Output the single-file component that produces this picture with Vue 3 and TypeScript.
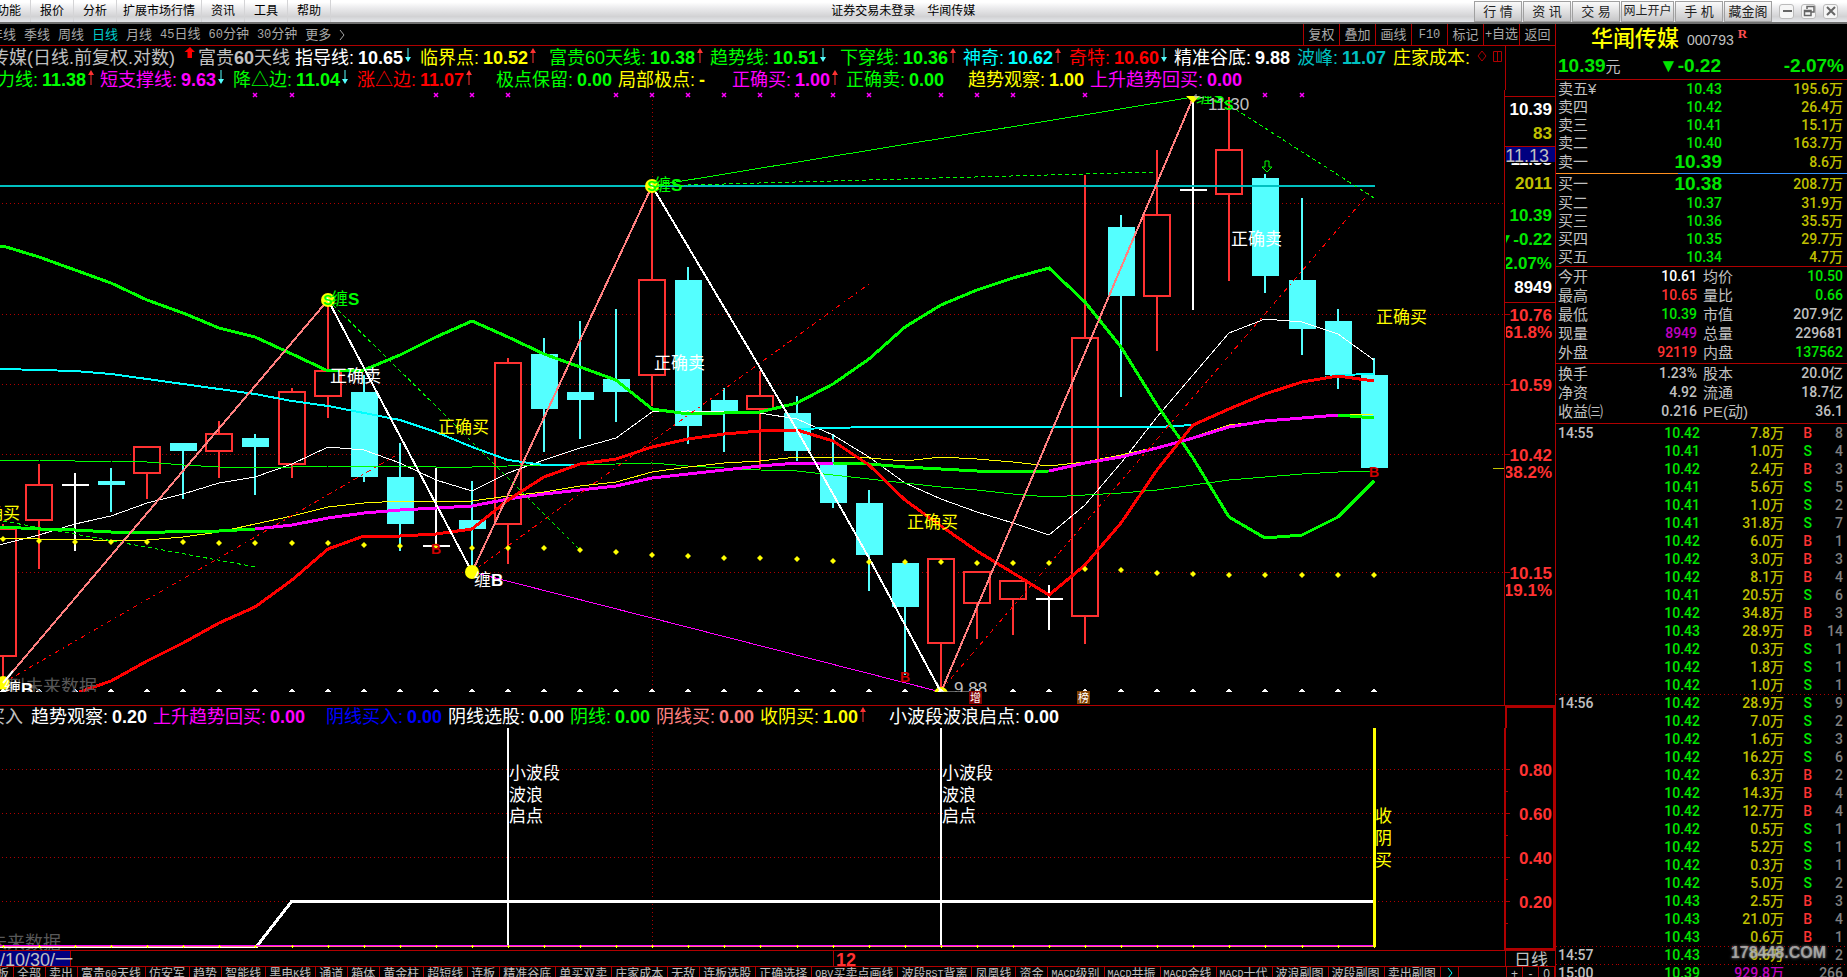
<script setup lang="ts">
interface Indicator { label: string; value?: string; color: string; span: number; arrow?: 'up' | 'down' }
interface Candle { kind: 'up' | 'down' | 'flat'; top: number; bottom: number; high: number; low: number }
interface Mark { x: number; y: number; text: string; cls: string }

const menus = ['功能', '报价', '分析', '扩展市场行情', '资讯', '工具', '帮助']
const links = [
  { text: '行 情', wide: false }, { text: '资 讯', wide: false }, { text: '交 易', wide: false },
  { text: '网上开户', wide: true }, { text: '手 机', wide: false }, { text: '藏金阁', wide: false },
]
const periods = ['年线', '季线', '周线', '日线', '月线', '45日线', '60分钟', '30分钟', '更多']
const tools = ['复权', '叠加', '画线', 'F10', '标记', '+自选', '返回']
const tabs = ['板', '全部', '卖出', '富贵60天线', '仿安军', '趋势', '智能线', '黑电K线', '通道', '箱体', '黄金柱', '超短线', '连板', '精准谷底', '单买双卖', '庄家成本', '无敌', '连板选股', '正确选择', 'QBV买卖点画线', '波段RST背离', '凤凰线', '资金', 'MACD级别', 'MACD共振', 'MACD金线', 'MACD十代', '波浪副图', '波段副图', '卖出副图']

function pieces(text: string) {
  return (text.match(/[A-Z0-9+]+|[^A-Z0-9+]+/g) ?? []).map((t) => ({ t, latin: /^[A-Z0-9+]/.test(t) }))
}

const row1: Indicator[] = [
  { label: '指导线:', value: '10.65', color: '#fff', span: 125, arrow: 'down' },
  { label: '临界点:', value: '10.52', color: '#ff0', span: 129, arrow: 'up' },
  { label: '富贵60天线:', value: '10.38', color: '#0f0', span: 161, arrow: 'up' },
  { label: '趋势线:', value: '10.51', color: '#0f0', span: 130, arrow: 'down' },
  { label: '下穿线:', value: '10.36', color: '#0f0', span: 123, arrow: 'up' },
  { label: '神奇:', value: '10.62', color: '#0ff', span: 106, arrow: 'up' },
  { label: '奇特:', value: '10.60', color: '#f00', span: 105, arrow: 'down' },
  { label: '精准谷底:', value: '9.88', color: '#fff', span: 123 },
  { label: '波峰:', value: '11.07', color: '#00c0c0', span: 96 },
  { label: '庄家成本:', color: '#ff0', span: 84 },
]
const row2: Indicator[] = [
  { label: '压力线:', value: '11.38', color: '#0f0', span: 121, arrow: 'up' },
  { label: '短支撑线:', value: '9.63', color: '#f0f', span: 133, arrow: 'down' },
  { label: '降△边:', value: '11.04', color: '#0f0', span: 124, arrow: 'down' },
  { label: '涨△边:', value: '11.07', color: '#f00', span: 139, arrow: 'up' },
  { label: '极点保留:', value: '0.00', color: '#0f0', span: 122 },
  { label: '局部极点:', value: '-', color: '#ff0', span: 114 },
  { label: '正确买:', value: '1.00', color: '#f0f', span: 114, arrow: 'up' },
  { label: '正确卖:', value: '0.00', color: '#0f0', span: 122 },
  { label: '趋势观察:', value: '1.00', color: '#ff0', span: 122 },
  { label: '上升趋势回买:', value: '0.00', color: '#f0f', span: 155 },
]
const row3: Indicator[] = [
  { label: '趋势观察:', value: '0.20', color: '#fff', span: 122 },
  { label: '上升趋势回买:', value: '0.00', color: '#f0f', span: 173 },
  { label: '阴线买入:', value: '0.00', color: '#00f', span: 122 },
  { label: '阴线选股:', value: '0.00', color: '#fff', span: 122 },
  { label: '阴线:', value: '0.00', color: '#0f0', span: 86 },
  { label: '阴线买:', value: '0.00', color: '#ff8080', span: 104 },
  { label: '收阴买:', value: '1.00', color: '#ff0', span: 129, arrow: 'up' },
  { label: '小波段波浪启点:', value: '0.00', color: '#fff', span: 175 },
]

const xAt = (i: number) => Math.round(3 + 36.07 * i)
const c = (kind: Candle['kind'], top: number, bottom: number, high: number, low: number): Candle => ({ kind, top, bottom, high, low })
const candles: Candle[] = [
  c('up', 529, 656, 524, 680), c('up', 485, 520, 464, 569), c('flat', 485, 485, 473, 551), c('down', 481, 485, 468, 512),
  c('up', 447, 473, 447, 499), c('down', 443, 451, 443, 499), c('up', 434, 451, 421, 478), c('down', 438, 447, 434, 495),
  c('up', 392, 464, 388, 478), c('up', 371, 396, 300, 418), c('down', 392, 477, 375, 482), c('down', 477, 524, 443, 551),
  c('flat', 546, 546, 468, 547), c('down', 520, 529, 481, 570), c('up', 363, 524, 358, 564), c('down', 354, 409, 338, 452),
  c('down', 392, 400, 321, 439), c('down', 379, 392, 309, 422), c('up', 280, 375, 190, 406), c('down', 280, 426, 267, 444),
  c('down', 400, 413, 388, 452), c('up', 396, 409, 371, 469), c('down', 413, 451, 396, 461), c('down', 464, 503, 434, 508),
  c('down', 503, 555, 490, 591), c('down', 563, 607, 563, 675), c('up', 559, 643, 559, 688), c('up', 572, 603, 572, 639),
  c('up', 581, 599, 581, 635), c('flat', 599, 599, 585, 630), c('up', 338, 616, 175, 644), c('down', 227, 296, 215, 397),
  c('up', 215, 296, 150, 351), c('flat', 190, 190, 100, 310), c('up', 150, 194, 97, 281), c('down', 178, 276, 174, 293),
  c('down', 280, 329, 198, 355), c('down', 321, 375, 309, 389), c('down', 375, 468, 358, 468),
]
const line = (start: number, ys: number[]) => (start === 0 ? `0,${ys[0]} ` : '') + ys.map((y, k) => `${xAt(start + k)},${y}`).join(' ')

const upper = line(0, [246, 257, 270, 283, 300, 313, 328, 337, 354, 371, 370, 355, 337, 321, 337, 354, 367, 380, 409, 414, 413, 412, 403, 384, 359, 327, 305, 290, 278, 268, 302, 347, 405, 458, 517, 538, 535, 517, 481])
const cyanA = line(0, [369, 370, 371, 374, 379, 384, 389, 394, 401, 406, 413, 420, 432, 447, 460, 465, 465])
const cyanB = line(22, [429, 428, 427, 427, 427, 427, 427, 427, 427, 427, 427, 425, 409, 394, 382, 375, 374])
const redLine = `79,692 ${line(3, [681, 661, 643, 623, 607, 580, 549, 536, 536, 534, 529, 500, 477, 464, 459, 447, 439, 434, 431, 430, 441, 465, 500, 526, 551, 573, 595, 565, 523, 470, 425, 409, 394, 382, 376, 381])}`
const whiteLine = line(0, [544, 535, 524, 516, 503, 494, 483, 477, 464, 447, 450, 463, 480, 491, 473, 460, 448, 438, 412, 411, 412, 413, 419, 435, 457, 483, 499, 512, 523, 535, 505, 463, 417, 375, 333, 319, 322, 334, 360])
const yellowLine = line(0, [538, 539, 539, 541, 540, 537, 532, 524, 516, 507, 503, 501, 501, 501, 496, 492, 486, 482, 472, 467, 463, 461, 457, 457, 458, 461, 457, 459, 462, 466, 462, 455, 447, 437, 425, 421, 418, 415, 414])
const trend = [527, 529, 530, 532, 533, 531, 531, 529, 525, 518, 513, 510, 508, 506, 499, 494, 490, 486, 478, 474, 470, 466, 463, 463, 464, 467, 469, 471, 472, 471, 463, 457, 448, 438, 427, 421, 418, 415, 418]
const trendParts = [[0, 7, '#0f0'], [7, 23, '#f0f'], [23, 29, '#0f0'], [29, 37, '#f0f'], [37, 38, '#0f0']].map(([a, b, color]) => ({
  color: color as string, pts: line(a as number, trend.slice(a as number, (b as number) + 1)),
}))
const thinGreen = line(0, [460, 460, 461, 461, 462, 465, 467, 468, 467, 466, 466, 466, 467, 467, 466, 465, 465, 464, 463, 466, 468, 470, 471, 475, 479, 483, 487, 490, 494, 497, 495, 493, 490, 485, 480, 477, 474, 472, 471])
const dots = [539, 541, 542, 542, 542, 542, 543, 543, 543, 543, 545, 546, 546, 548, 548, 548, 550, 552, 555, 556, 558, 558, 559, 561, 562, 562, 562, 563, 563, 563, 569, 570, 573, 574, 575, 575, 575, 575, 575]
const crosses = [7, 8, 12, 13, 14, 17, 18, 19, 20, 21, 22, 23, 24, 26, 27, 28, 30, 35, 36]

const notes: Mark[] = [
  { x: 330, y: 382, text: '正确卖', cls: 'white' }, { x: 654, y: 369, text: '正确卖', cls: 'white' },
  { x: 1231, y: 245, text: '正确卖', cls: 'white' }, { x: 438, y: 433, text: '正确买', cls: 'yellow' },
  { x: 907, y: 528, text: '正确买', cls: 'yellow' }, { x: 1376, y: 323, text: '正确买', cls: 'yellow' },
  { x: -31, y: 519, text: '正确买', cls: 'yellow' },
]
const axisRed = [
  { y: 321, t: '10.76' }, { y: 338, t: '61.8%' }, { y: 391, t: '10.59' }, { y: 461, t: '10.42' },
  { y: 478, t: '38.2%' }, { y: 579, t: '10.15' }, { y: 596, t: '19.1%' },
]
const subAxis = [{ y: 769, t: '0.80' }, { y: 813, t: '0.60' }, { y: 857, t: '0.40' }, { y: 901, t: '0.20' }]

const asks = [['卖五¥', '10.43', '195.6万'], ['卖四', '10.42', '26.4万'], ['卖三', '10.41', '15.1万'], ['卖二', '10.40', '163.7万'], ['卖一', '10.39', '8.6万']]
const bids = [['买一', '10.38', '208.7万'], ['买二', '10.37', '31.9万'], ['买三', '10.36', '35.5万'], ['买四', '10.35', '29.7万'], ['买五', '10.34', '4.7万']]
const quote = [
  ['今开', '10.61', 'white', '均价', '10.50', 'green'], ['最高', '10.65', 'red', '量比', '0.66', 'green'],
  ['最低', '10.39', 'green', '市值', '207.9亿', 'grey'], ['现量', '8949', 'purple', '总量', '229681', 'grey'],
  ['外盘', '92119', 'red', '内盘', '137562', 'green'],
]
const basics = [
  ['换手', '1.23%', 'grey', '股本', '20.0亿', 'grey'], ['净资', '4.92', 'grey', '流通', '18.7亿', 'grey'],
  ['收益㈢', '0.216', 'grey', 'PE(动)', '36.1', 'grey'],
]
const ticks = `14:55 10.42 7.8 B 8|- 10.41 1.0 S 4|- 10.42 2.4 B 3|- 10.41 5.6 S 5|- 10.41 1.0 S 2|- 10.41 31.8 S 7|- 10.42 6.0 B 1|- 10.42 3.0 B 3|- 10.42 8.1 B 4|- 10.41 20.5 S 6|- 10.42 34.8 B 3|- 10.43 28.9 B 14|- 10.42 0.3 S 1|- 10.42 1.8 S 1|- 10.42 1.0 S 1|14:56 10.42 28.9 S 9|- 10.42 7.0 S 2|- 10.42 1.6 S 3|- 10.42 16.2 S 6|- 10.42 6.3 B 2|- 10.42 14.3 B 4|- 10.42 12.7 B 4|- 10.42 0.5 S 1|- 10.42 5.2 S 1|- 10.42 0.3 S 1|- 10.42 5.0 S 2|- 10.43 2.5 B 3|- 10.43 21.0 B 4|- 10.43 0.6 B 1|14:57 10.43 0.6 - 2|15:00 10.39 929.8 - 266`
  .split('|').map((r) => r.split(' ').map((v) => (v === '-' ? '' : v)))
</script>

<template>
  <div class="app">
    <header class="menubar">
      <nav class="menus"><button v-for="m in menus" :key="m" :class="{ tight: m.length > 4 }">{{ m }}</button></nav>
      <h1 class="caption"><span>证券交易未登录</span><span>华闻传媒</span></h1>
      <div class="links">
        <button v-for="l in links" :key="l.text" :class="{ wide: l.wide }">{{ l.text }}</button>
        <button class="win" aria-label="最小化"><svg width="14" height="14"><path d="M3 7h9" stroke="#666" stroke-width="2" /></svg></button>
        <button class="win" aria-label="还原"><svg width="14" height="14" fill="none" stroke="#666" stroke-width="1.5"><path d="M5 5V2.500H12V8H9.500M2.500 6.500H9V11.500H2.500ZM2.500 7.500H9" /></svg></button>
        <button class="win" aria-label="关闭"><svg width="14" height="14"><path d="M3 3l8 8M11 3l-8 8" stroke="#666" stroke-width="2" /></svg></button>
      </div>
    </header>

    <div class="body">
      <main class="charts">
        <div class="toolbar">
          <nav class="periods">
            <button v-for="p in periods" :key="p" :class="{ on: p === '日线' }"><span v-for="(s, k) in pieces(p)" :key="k" :class="{ latin: s.latin }">{{ s.t }}</span></button>
            <svg width="7" height="12" fill="none" stroke="#a8a8a8"><path d="M1 1l4 5l-4 5" /></svg>
          </nav>
          <div class="tools"><button v-for="t in tools" :key="t"><span v-for="(s, k) in pieces(t)" :key="k" :class="{ latin: s.latin }">{{ s.t }}</span></button></div>
        </div>

        <div class="legend main">
          <div class="rows">
            <div class="row first">
              <span class="name">传媒(日线.前复权.对数)</span>
              <svg class="rise" width="12" height="12"><path d="M6 0L11 5H8V11H3.500V5H0.500Z" fill="red" /></svg>
              <span class="plan">富贵<b>60</b>天线</span>
              <span v-for="i in row1" :key="i.label" class="ind" :style="{ color: i.color, flexBasis: i.span + 'px' }">{{ i.label }}<b>{{ i.value }}</b><svg v-if="i.arrow" width="7" height="16" :class="i.arrow"><path v-if="i.arrow === 'up'" d="M3 3V15" /><path v-else d="M3 0V12" /><polygon :points="i.arrow === 'up' ? '3,0 6,5 0,5' : '3,14 6,9 0,9'" /></svg></span>
              <svg class="marks" width="26" height="14" fill="none" stroke="#b00000"><path d="M5 1l4 5l-4 5l-4-5zM16.500 1.500h8v10h-8zM20.500 1.500v10" /></svg>
            </div>
            <div class="row second">
              <span v-for="i in row2" :key="i.label" class="ind" :style="{ color: i.color, flexBasis: i.span + 'px' }">{{ i.label }}<b>{{ i.value }}</b><svg v-if="i.arrow" width="7" height="16" :class="i.arrow"><path v-if="i.arrow === 'up'" d="M3 3V15" /><path v-else d="M3 0V12" /><polygon :points="i.arrow === 'up' ? '3,0 6,5 0,5' : '3,14 6,9 0,9'" /></svg></span>
            </div>
          </div>
          <div class="axis-cap"></div>
        </div>

        <svg class="plot" viewBox="0 90 1555 615" preserveAspectRatio="xMaxYMin slice">
          <defs>
            <clipPath id="area"><rect x="0" y="90" width="1504" height="602" /></clipPath>
            <clipPath id="peak"><rect x="1190" y="96" width="80" height="20" /></clipPath>
            <clipPath id="axis"><rect x="1506" y="90" width="49" height="615" /></clipPath>
            <clipPath id="peek"><rect x="1506" y="163" width="49" height="10" /></clipPath>
          </defs>
          <g class="grid">
            <path v-for="y in [203, 314, 384, 454, 572]" :key="y" :d="`M2 ${y}.5H1504`" /><path d="M652.5 100V690" />
          </g>
          <g shape-rendering="crispEdges" clip-path="url(#area)">
            <g v-for="(k, i) in candles" :key="i" :class="k.kind">
              <template v-if="k.kind === 'up'">
                <path :d="`M${xAt(i)} ${k.high}V${k.top}M${xAt(i)} ${k.bottom}V${k.low}`" />
                <rect :x="xAt(i) - 13" :y="k.top" width="26" :height="k.bottom - k.top" />
              </template>
              <template v-else-if="k.kind === 'down'">
                <path :d="`M${xAt(i)} ${k.high}V${k.low}`" />
                <rect :x="xAt(i) - 13" :y="k.top" width="27" :height="k.bottom - k.top" />
              </template>
              <path v-else :d="`M${xAt(i)} ${k.high}V${k.low}M${xAt(i) - 13} ${k.top}h27`" />
            </g>
          </g>
          <g class="lines" clip-path="url(#area)">
            <polyline points="0,186 1375,186" stroke="#00c0c0" stroke-width="2" />
            <polyline :points="whiteLine" stroke="#fff" /><polyline :points="thinGreen" stroke="#0f0" />
            <polyline :points="yellowLine" stroke="#ff0" />
            <polyline :points="cyanA" stroke="#0ff" stroke-width="2" /><polyline :points="cyanB" stroke="#0ff" stroke-width="2" />
            <polyline :points="upper" stroke="#0f0" stroke-width="3" />
            <polyline v-for="(p, k) in trendParts" :key="k" :points="p.pts" :stroke="p.color" stroke-width="3" />
            <polyline :points="redLine" stroke="#f00" stroke-width="3" />
            <g stroke="#f00" stroke-dasharray="5 4 2 4"><path d="M3 683L395 456M472 572L869 284M941 690L1370 192" /></g>
            <g stroke="#0f0" stroke-dasharray="4 3"><path d="M328 300L447 417L580 550M3 521L256 567M652 186L1155 172M1218 98L1374 198" /></g>
            <path d="M652 186L1193 97" stroke="#0f0" /><path d="M472 572L941 692" stroke="#f0f" />
            <g stroke-width="2"><path d="M3 683L328 300M472 572L652 186M941 692L1193 98" stroke="#ff8080" /><path d="M328 300L472 572M652 186L797 430L869 558L941 692" stroke="#fff" /></g>
          </g>
          <g clip-path="url(#area)">
            <circle v-for="(p, k) in [[3, 683], [328, 300], [472, 572], [652, 186], [941, 694]]" :key="k" :cx="p[0]" :cy="p[1]" r="7" fill="#ff0" />
            <path d="M1186 96h14l-7 7z" fill="#ff0" />
            <path v-for="(y, i) in dots" :key="i" :d="`M${xAt(i)} ${y - 3}l3 3l-3 3l-3 -3z`" fill="#ff0" />
            <path v-for="(y, i) in dots" :key="'t' + i" :d="`M${xAt(i)} 689l3 3h-6z`" fill="#fff" stroke="#fff" />
            <path v-for="i in crosses" :key="'x' + i" :d="`M${xAt(i) - 2} 93l4 4m0 -4l-4 4`" stroke="#f0f" stroke-width="1.500" />
            <path d="M327 298l2 4M651 184l2 4M3 683l10 -12M941 692l-5 -10" stroke="#fff" stroke-width="2" />
            <g class="zh">
              <text x="323" y="305" class="green small">S</text><text x="331" y="305" class="green">缠<tspan class="strong">S</tspan></text>
              <text x="647" y="191" class="green small">S</text><text x="654" y="191" class="green">缠<tspan class="strong">S</tspan></text>
              <text x="474" y="586" class="white">缠<tspan class="strong">B</tspan></text>
              <text x="7" y="693" class="dim">到未来数据</text><text x="4" y="695" class="white">缠<tspan class="strong">B</tspan></text>
              <g clip-path="url(#peak)"><text x="1196" y="103" class="green">缠<tspan class="strong">S</tspan></text></g>
              <text v-for="(n, k) in notes" :key="k" :x="n.x" :y="n.y" :class="n.cls">{{ n.text }}</text>
            </g>
            <text x="1208" y="110" class="num light">11.30</text><text x="1224" y="110" class="green small">S</text>
            <path d="M1194 96l10 2M1196 94v5M941 692h28" stroke="#c0c0c0" />
            <text x="954" y="694" class="num light">9.88</text>
            <g class="bmark"><text x="431" y="554">B</text><text x="900" y="682">B</text><text x="1369" y="477">B</text></g>
            <path d="M1265 161h4v6h3l-5 5l-5-5h3z" fill="none" stroke="#0f0" />
          </g>
          <g class="badge"><rect x="969" y="691" width="13" height="13" fill="#800000" /><text x="970" y="702">增</text><rect x="1077" y="691" width="13" height="13" fill="#804000" /><text x="1078" y="702">榜</text></g>
          <g class="frame"><path d="M1504.500 90V705M1505 96.500H1555M1505 146.500H1555M1505 302.500H1555" /><path v-for="y in [314, 384, 454, 572]" :key="y" :d="`M1505 ${y}.5h5`" /></g>
          <path d="M1493 468.500h11" stroke="#c0c000" />
          <g class="num right heavy" clip-path="url(#axis)">
            <text x="1552" y="115" class="white">10.39</text><text x="1552" y="139" class="gold">83</text>
            <rect x="1505" y="147" width="50" height="15" fill="#000080" /><text x="1549" y="162" class="light plain">11.13</text>
            <g clip-path="url(#peek)"><text x="1552" y="165" class="white">11.38</text></g>
            <text x="1552" y="189" class="gold">2011</text><text x="1552" y="221" class="lime">10.39</text>
            <text x="1552" y="245" class="lime">▼-0.22</text><text x="1552" y="269" class="lime">-2.07%</text><text x="1552" y="293" class="white">8949</text>
            <text v-for="a in axisRed" :key="a.t" x="1552" :y="a.y" class="coral">{{ a.t }}</text>
          </g>
        </svg>

        <div class="legend sub">
          <div class="rows"><div class="row third">
            <span class="buyin">买入</span>
            <span v-for="i in row3" :key="i.label" class="ind" :style="{ color: i.color, flexBasis: i.span + 'px' }">{{ i.label }}<b>{{ i.value }}</b><svg v-if="i.arrow" width="7" height="16" :class="i.arrow"><path d="M3 3V15" /><polygon points="3,0 6,5 0,5" /></svg></span>
          </div></div>
          <div class="axis-cap"></div>
        </div>

        <svg class="plot" viewBox="0 728 1555 222" preserveAspectRatio="xMaxYMin slice">
          <g class="grid"><path v-for="a in subAxis" :key="a.y" :d="`M2 ${a.y}.5H1504`" /><path d="M652.5 728V948" /></g>
          <g class="zh"><text x="-29" y="949" class="dim">到未来数据</text>
            <g v-for="x in [508, 941]" :key="x" class="white"><text :x="x + 1" y="779">小波段</text><text :x="x + 1" y="801">波浪</text><text :x="x + 1" y="822">启点</text></g>
            <g class="yellow"><text x="1375" y="822">收</text><text x="1375" y="844">阴</text><text x="1375" y="866">买</text></g>
          </g>
          <g shape-rendering="crispEdges" fill="none">
            <polyline points="0,946 257,946 292,901 1374,901" stroke="#fff" stroke-width="3" />
            <path d="M508 728V947M941 728V947" stroke="#fff" stroke-width="2" />
            <path d="M0 945.500H1374" stroke="#f0f" /><path d="M0 946.500H1374" stroke="#ff8080" />
            <path d="M1374.500 728V947" stroke="#ff0" stroke-width="3" />
            <path v-for="(y, i) in dots" :key="i" :d="`M${xAt(i)}.5 945v3M${xAt(i) - 1} 946.5h3`" stroke="#ff0" />
          </g>
          <g class="frame"><path d="M1505 728V949H1554V728" stroke-width="2" />
            <path v-for="a in subAxis" :key="a.y" :d="`M1505 ${a.y}.5h5M1505 ${a.y + 22}.5h3`" /></g>
          <g class="num right heavy"><text v-for="a in subAxis" :key="a.t" x="1552" :y="a.y + 7" class="coral">{{ a.t }}</text></g>
        </svg>

        <div class="dates">
          <span class="today">/10/30/一</span>
          <span class="month">12</span>
          <span class="unit">日线</span>
        </div>
        <div class="tabs">
          <button v-for="t in tabs" :key="t"><span v-for="(s, k) in pieces(t)" :key="k" :class="{ latin: s.latin }">{{ s.t }}</span></button>
          <button class="more" aria-label="更多指标"><svg width="7" height="12" fill="none" stroke="#0ff"><path d="M1 1l4 5l-4 5" /></svg></button>
          <span class="grow"></span>
          <button class="zoomer">+</button><button class="zoomer">-</button><button class="zoomer">0</button>
        </div>
      </main>

      <aside class="side">
        <div class="stock"><h2>华闻传媒</h2><span class="code">000793</span><sup>R</sup></div>
        <div class="last"><span><b>10.39</b><small>元</small></span><b class="chg">▼-0.22</b><b class="pct">-2.07%</b></div>
        <table class="book"><tbody>
          <tr v-for="(r, k) in asks" :key="r[0]" :class="{ best: k === 4 }"><th>{{ r[0] }}</th><td class="p">{{ r[1] }}</td><td class="v">{{ r[2] }}</td></tr>
        </tbody></table>
        <div class="split"></div>
        <table class="book"><tbody>
          <tr v-for="(r, k) in bids" :key="r[0]" :class="{ best: k === 0 }"><th>{{ r[0] }}</th><td class="p">{{ r[1] }}</td><td class="v">{{ r[2] }}</td></tr>
        </tbody></table>
        <table v-for="(block, n) in [quote, basics]" :key="n" class="info"><tbody>
          <tr v-for="r in block" :key="r[0]"><th>{{ r[0] }}</th><td class="a" :class="r[2]">{{ r[1] }}</td><th>{{ r[3] }}</th><td :class="r[5]">{{ r[4] }}</td></tr>
        </tbody></table>
        <table class="ticks"><tbody>
          <tr v-for="(r, k) in ticks" :key="k" :class="{ minute: r[0] && k }">
            <th>{{ r[0] }}</th><td class="p">{{ r[1] }}</td><td class="v" :class="{ purple: k === 30 }">{{ r[2] }}万</td><td class="side-flag" :class="r[3] === 'B' ? 'red' : 'green'">{{ r[3] }}</td><td class="n">{{ r[4] }}</td>
          </tr>
        </tbody></table>
        <div class="stamp">178448.COM</div>
      </aside>
    </div>
  </div>
</template>

<style>
html, body { background: #000; overflow: hidden; }
</style>

<style scoped>
.app { height: 100vh; display: flex; flex-direction: column; background: #000; color: #c0c0c0; font-family: "Liberation Sans", "Noto Sans CJK SC", sans-serif; overflow: hidden; }
button { border: 0; padding: 0; margin: 0; background: none; color: inherit; font: inherit; white-space: nowrap; }
.menubar { flex: 0 0 24px; box-sizing: border-box; display: flex; align-items: stretch; justify-content: space-between; position: relative; border-bottom: 2px solid #707070; background: linear-gradient(#fff 10%, #ececee 35%, #d2d2d4 75%, #e4e6ea); color: #000; font-size: 12px; line-height: 22px; }
.menus { display: flex; margin-left: -12px; }
.menus button { padding: 0 9px; border-right: 1px solid #d4d4d6; }
.menus .tight { padding: 0 6px; }
.caption { position: absolute; left: 45%; top: 0; margin: 0; display: flex; gap: 12px; font-size: 12px; font-weight: 400; }
.links { display: flex; align-items: center; gap: 1px; padding-right: 9px; }
.links button { box-sizing: border-box; width: 48px; height: 21px; border: 1px solid #a0a0a0; background: linear-gradient(#fafafa, #c6c6c8); color: #222; font-size: 13px; line-height: 19px; }
.links .wide { width: 53px; font-size: 12px; }
.links .win { width: 15px; height: 15px; margin: 0 0 0 6px; border: 1px solid #bbb; border-radius: 3px; background: #f6f6f6; display: flex; align-items: center; justify-content: center; }
.body { flex: 1; min-height: 0; display: grid; grid-template-columns: minmax(0, 1fr) 291px; }
.charts { min-width: 0; display: grid; grid-template-rows: 22px 44px minmax(0, 615fr) 23px minmax(0, 222fr) 16px 11px; overflow: hidden; border-right: 1px solid #b00000; }
.toolbar { display: flex; justify-content: space-between; border-bottom: 1px solid #b00000; font-size: 13px; line-height: 20px; color: #a8a8a8; min-width: 0; }
.periods { display: flex; align-items: center; gap: 8px; margin-left: -10px; }
.periods .on { color: #0cc; }
.latin { font-family: "Liberation Mono", monospace; font-size: 12px; }
.tools { display: flex; }
.tools button { width: 36px; box-sizing: border-box; border-left: 1px solid #b00000; }
.legend { display: grid; grid-template-columns: minmax(0, 1fr) 50px; overflow: hidden; font-size: 18px; line-height: 22px; white-space: nowrap; }
.legend.sub { border-top: 1px solid #b00000; }
.axis-cap { border-left: 1px solid #b00000; }
.sub .axis-cap { border: 2px solid #b00000; border-bottom: 0; }
.rows { overflow: hidden; }
.main .rows { padding-top: 1px; }
.row { display: flex; height: 22px; }
.row b { font-size: 18px; }
.first { margin-left: -9px; }
.name { flex: 0 0 193px; }
.rise { flex: 0 0 14px; }
.plan { flex: 0 0 97px; }
.second { margin-left: -21px; }
.third { margin-left: -13px; }
.buyin { flex: 0 0 44px; }
.ind { flex-grow: 0; flex-shrink: 0; display: flex; }
.ind b { margin-left: 4px; }
.ind svg { margin: 1px 0 0 2px; }
.up { stroke: #ff3232; } .up polygon { fill: #ff3232; stroke: none; }
.down { stroke: #54ffff; } .down polygon { fill: #54ffff; stroke: none; }
.marks { margin-top: 3px; }
.plot { width: 100%; height: 100%; display: block; }
.grid path { stroke: #b00000; stroke-dasharray: 1 3; fill: none; }
.frame path { stroke: #b00000; fill: none; }
.plot .up { stroke: #ff3232; stroke-width: 2; fill: #000; }
.plot .down { stroke: #54ffff; stroke-width: 2; fill: #54ffff; }
.plot .down rect { stroke: none; }
.plot .flat { stroke: #fff; stroke-width: 2; }
.lines { fill: none; shape-rendering: crispEdges; }
.zh { font-size: 17px; }
.dim { fill: #585858; font-size: 18px; }
.strong { font-weight: 700; }
.small { font-size: 14px; font-weight: 700; }
.num { font-size: 17px; }
.right { text-anchor: end; }
.heavy { font-weight: 700; }
.plain { font-weight: 400; font-size: 18px; }
.white { fill: #fff; color: #fff; } .yellow { fill: #ff0; } .light { fill: #c0c0c0; } .gold { fill: #c0c000; }
.lime { fill: #00e600; } .coral { fill: #ff3232; } .green { fill: #0f0; color: #00e600; } .red { color: #ff3232; }
.purple { color: #c000c0; } .grey { color: #c0c0c0; }
.bmark { fill: #d00000; font-size: 14px; font-weight: 700; }
.badge { fill: #fff; font-size: 11px; }
.dates { box-sizing: border-box; border-top: 1px solid #b00000; display: grid; grid-template-columns: 71px minmax(0, 1fr) 672px 50px; overflow: hidden; font-size: 18px; line-height: 19px; }
.today { background: #000080; white-space: nowrap; border-right: 1px solid #b00000; }
.month { grid-column: 3; border-left: 1px solid #b00000; color: #ff3232; font-weight: 700; padding-left: 2px; }
.unit { border-left: 1px solid #b00000; font-size: 17px; padding-left: 8px; }
.tabs { display: flex; border-top: 1px solid #b00000; overflow: hidden; font-size: 12px; line-height: 15px; height: 11px; box-sizing: border-box; }
.tabs button { flex: none; height: 15px; padding: 0 4px 0 3px; border-right: 1px solid #b00000; display: flex; }
.tabs button:first-child { margin-left: -6px; }
.tabs .latin { font-size: 10px; }
.tabs .more { padding-left: 6px; }
.grow { flex: 1; border-right: 1px solid #b00000; }
.tabs .zoomer { width: 16px; box-sizing: border-box; padding: 0; justify-content: center; }
.side { position: relative; min-width: 0; overflow: hidden; font-size: 14px; }
.stock { display: flex; align-items: center; height: 29px; margin-left: 35px; gap: 8px; }
.stock h2 { margin: 0; font-size: 22px; line-height: 29px; font-weight: 500; color: #ff0; }
.code { padding-top: 2px; }
.stock sup { color: #ff5050; font: bold 13px "Liberation Serif", serif; align-self: flex-start; padding-top: 2px; margin-left: -4px; }
.last { display: grid; grid-template-columns: 1fr auto 123px; box-sizing: border-box; height: 27px; padding: 0 3px 0 2px; border-bottom: 1px solid #b00000; font-size: 19px; line-height: 25px; color: #00e600; }
.last small { font-size: 15px; color: #c0c0c0; }
.pct { text-align: right; }
table { width: 100%; border-collapse: separate; border-spacing: 0; table-layout: fixed; }
th, td { padding: 0; font-weight: 400; text-align: right; white-space: nowrap; height: 18px; line-height: 18px; }
th { text-align: left; font-size: 15px; padding-left: 2px; }
td { font-weight: 500; font-family: Roboto, "Noto Sans CJK SC", sans-serif; }
.book th { width: 76px; } .book .p { width: 88px; color: #00e600; } .book .v { color: #c0c000; padding-right: 4px; }
.book .best th, .book .best td { height: 20px; line-height: 20px; }
.book .best .p { font: bold 19px/20px "Liberation Sans", sans-serif; }
.split { height: 1px; margin-top: 1px; background: linear-gradient(90deg, #ff9020 42%, #3090ff 42%); }
.info { border-top: 1px solid #b00000; }
.info th, .info td { height: 19px; line-height: 19px; }
.info tr th:first-child { width: 60px; } .info .a { width: 79px; } .info th:nth-child(3) { width: 50px; padding-left: 6px; }
.info td:last-child { padding-right: 4px; }
.info + .info { margin-top: 1px; }
.info + .ticks { margin-top: 2px; }
.ticks { border-top: 1px solid #b00000; }
.ticks th { width: 60px; font-family: Roboto, sans-serif; font-size: 14px; font-weight: 500; }
.ticks .p { width: 82px; color: #00e600; } .ticks .v { width: 84px; color: #c0c000; } .ticks .v.purple { color: #c000c0; }
.ticks .side-flag { width: 28px; } .ticks .n { color: #808080; padding-right: 4px; }
.minute td, .minute th { background: repeating-linear-gradient(90deg, #b00000 0 1px, #000 1px 4px) top / 100% 1px no-repeat; }
.stamp { position: absolute; right: 21px; bottom: 12px; font: bold 16px/24px "Liberation Sans", sans-serif; color: rgba(190, 190, 190, 0.75); text-shadow: 0 0 3px #888; }
</style>
